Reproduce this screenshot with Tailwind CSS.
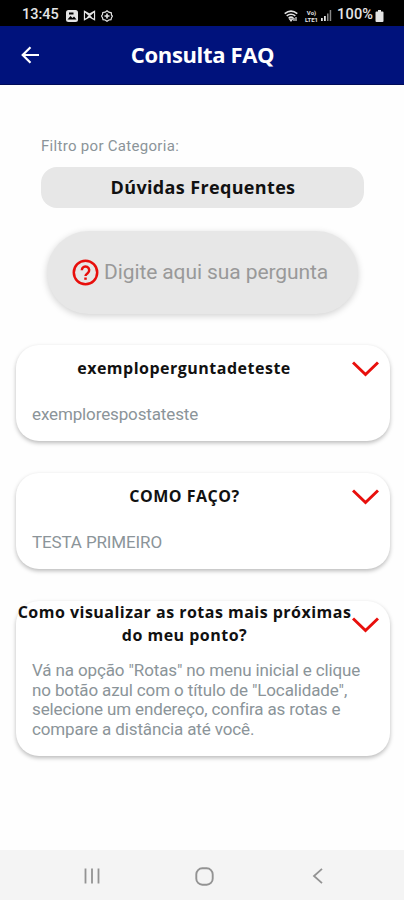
<!DOCTYPE html>
<html lang="pt-BR">
<head>
    <meta charset="UTF-8">
    <meta name="viewport" content="width=device-width, initial-scale=1.0">
    <title>Consulta FAQ</title>
    <script src="https://cdn.jsdelivr.net/npm/@tailwindcss/browser@4"></script>
</head>
<body class="h-[900px] flex flex-col overflow-hidden bg-[#fefefe] font-['Roboto',sans-serif]">
    <!-- Status bar -->
    <div class="h-[26px] shrink-0 bg-black text-[#e4e4e4] flex items-center justify-between pt-[5px] pl-[22px] pr-5">
        <div class="flex items-center">
            <span class="w-[37px] text-[14.5px] leading-none font-medium whitespace-nowrap">13:45</span>
            <svg class="ml-[7px] w-3 h-3" viewBox="0 0 12 12">
                <rect width="12" height="12" rx="2.5" fill="currentColor"/>
                <path d="M1.5 9.5 4.500 6l2 2L8 6.500l2.500 3z" fill="#000"/>
                <path d="M3 2.500h4.500v2H3z" fill="#000"/>
            </svg>
            <svg class="ml-[5px] w-[13px] h-[11px]" viewBox="0 0 13 12" fill="none" stroke="currentColor" stroke-width="1.300">
                <path d="M1 1.500v9l5.500-3 5.500 3v-9l-5.500 3zM1 1.500l8 7M12 1.500l-8 7"/>
            </svg>
            <svg class="ml-[5px] w-3 h-3" viewBox="0 0 12 12" fill="none" stroke="currentColor">
                <path d="M6 .8 7.800 2.200l2.500.6.2 2.300L11.500 6l-1 1.700-.5 2-2.200.3L6 11.300 4.200 10l-2.200-.3-.5-2L.5 6l1-1.500.3-2 2.400-.3z" stroke-width="1.200"/>
                <path d="M6 3.500v5M3.500 6h5" stroke-width="1.600"/>
            </svg>
        </div>
        <div class="flex items-center">
            <svg class="w-[15px] h-3" viewBox="0 0 15 12" fill="none" stroke="currentColor" stroke-width="1.600">
                <path d="M.7 3.600Q7 -1.400 13.300 3.600M2.700 5.900Q7 2.600 11.300 5.900M4.700 8.200Q7 6.200 9.300 8.200"/>
                <path d="m5.500 9 1.500 2 1.500-2zM12 7v4M10 11V8" stroke-width="1.200"/>
            </svg>
            <div class="ml-[5px] w-[15px] text-[6px] leading-[7px] font-bold text-center">
                <div>Vo)</div>
                <div class="whitespace-nowrap">LTE1</div>
            </div>
            <svg class="ml-px w-3 h-[11px]" viewBox="0 0 12 11">
                <path d="M1 8h1.800v3H1zM4 6h1.800v5H4z" fill="currentColor"/>
                <path d="M7 3.500h1.500V11H7zM9.700 0h1.500v11H9.700z" fill="#888"/>
            </svg>
            <span class="ml-[5px] w-[38px] text-[14.5px] leading-none font-medium whitespace-nowrap tracking-[0.2px]">100%</span>
            <svg class="w-[9px] h-3" viewBox="0 0 9 12" fill="currentColor">
                <path d="M3 0h3v1.500h1.500q1 0 1 1V11q0 1-1 1h-6q-1 0-1-1V2.500q0-1 1-1H3z"/>
            </svg>
        </div>
    </div>

    <!-- Header -->
    <div class="h-[59px] shrink-0 bg-[#00127c] border-b border-[#000b58] text-white grid grid-cols-[60px_1fr_60px] items-center">
        <svg class="ml-[21px] w-[19px] h-[18px]" viewBox="0 0 19 18" fill="none" stroke="currentColor" stroke-width="2.200">
            <path d="M18 9H2M9.500 1.200 1.700 9l7.800 7.800"/>
        </svg>
        <h1 class="pb-[2px] pl-[1px] text-center text-[22px] leading-none font-bold tracking-[-0.35px] font-['Open_Sans',sans-serif]">Consulta FAQ</h1>
    </div>

    <main class="flex-1 flex flex-col">
        <!-- Category filter -->
        <label class="mt-[51px] ml-[41px] text-[15px] leading-5 text-[#8b9499] tracking-[0.3px]">Filtro por Categoria:</label>
        <div class="mt-[11px] ml-[41px] w-[323px] h-[41px] rounded-[16px] bg-[#e7e7e7] flex items-center justify-center pb-[2px] pl-[1px] text-[18px] leading-none font-bold text-[#111] tracking-[0.35px] font-['Open_Sans',sans-serif]">Dúvidas Frequentes</div>

        <!-- Search -->
        <div class="mt-[23px] ml-[47px] w-[311px] h-[83px] rounded-full bg-[#e7e7e7] shadow-[0_2px_7px_rgba(0,0,0,0.18)] flex items-center pl-[25px]">
            <svg class="w-[27px] h-[27px] text-[#e80f0c]" viewBox="0 0 27 27" fill="none" stroke="currentColor" stroke-width="2.500">
                <circle cx="13.500" cy="13.500" r="11.700"/>
                <path d="M9.800 11.200a3.700 3.700 0 1 1 5.800 3c-1.400 1-2.100 1.500-2.100 2.800"/>
                <path d="M13.500 18.500v2.300"/>
            </svg>
            <span class="ml-[5px] text-[21px] text-[#999] tracking-[-0.1px] whitespace-nowrap">Digite aqui sua pergunta</span>
        </div>

        <!-- Questions -->
        <div class="mt-[31px] ml-4 w-[374px] flex flex-col gap-8">
            <div class="h-24 rounded-[23px] bg-white shadow-[0_2px_4px_rgba(0,0,0,0.27)]">
                <div class="h-[47px] flex items-center">
                    <h2 class="w-[336px] text-center text-[16px] leading-[23px] font-bold text-[#111] tracking-[0.5px] font-['Open_Sans',sans-serif]">exemploperguntadeteste</h2>
                    <svg class="w-[27px] h-4 text-[#e80f0c]" viewBox="0 0 27 16" fill="none" stroke="currentColor" stroke-width="3">
                        <path d="M1 1.500 13.500 13.500 26 1.500"/>
                    </svg>
                </div>
                <p class="mt-[13px] ml-4 text-[17px] leading-[19.700px] text-[#8b9499] tracking-[-0.13px]">exemplorespostateste</p>
            </div>
            <div class="h-24 rounded-[23px] bg-white shadow-[0_2px_4px_rgba(0,0,0,0.27)]">
                <div class="h-[47px] flex items-center">
                    <h2 class="w-[336px] pl-[1px] text-center text-[16px] leading-[23px] font-bold text-[#111] tracking-[0.5px] font-['Open_Sans',sans-serif]">COMO FAÇO?</h2>
                    <svg class="w-[27px] h-4 text-[#e80f0c]" viewBox="0 0 27 16" fill="none" stroke="currentColor" stroke-width="3">
                        <path d="M1 1.500 13.500 13.500 26 1.500"/>
                    </svg>
                </div>
                <p class="mt-[13px] ml-4 text-[17px] leading-[19.700px] text-[#8b9499] tracking-[-0.130px]">TESTA PRIMEIRO</p>
            </div>
            <div class="h-[155px] rounded-[23px] bg-white shadow-[0_2px_4px_rgba(0,0,0,0.27)]">
                <div class="h-[47px] flex items-center">
                    <h2 class="w-[336px] pb-[1px] pl-[1px] text-center text-[16px] leading-[23.500px] font-bold text-[#111] tracking-[0.48px] whitespace-nowrap font-['Open_Sans',sans-serif]">Como visualizar as rotas mais próximas<br>do meu ponto?</h2>
                    <svg class="w-[27px] h-4 text-[#e80f0c]" viewBox="0 0 27 16" fill="none" stroke="currentColor" stroke-width="3">
                        <path d="M1 1.500 13.500 13.500 26 1.500"/>
                    </svg>
                </div>
                <p class="mt-[13px] ml-4 text-[17px] leading-[19.700px] text-[#8b9499] tracking-[-0.130px] whitespace-nowrap">Vá na opção "Rotas" no menu inicial e clique<br>no botão azul com o título de "Localidade",<br>selecione um endereço, confira as rotas e<br>compare a distância até você.</p>
            </div>
        </div>
    </main>

    <!-- Navigation bar -->
    <nav class="h-[50px] shrink-0 bg-[#f4f4f4] text-[#939393] flex items-center pt-[2px]">
        <svg class="ml-[84px] w-4 h-4" viewBox="0 0 16 16" fill="none" stroke="currentColor" stroke-width="1.800">
            <path d="M1.500.5v15M8 .5v15M14.500.5v15"/>
        </svg>
        <svg class="ml-[95px] w-[19px] h-[19px]" viewBox="0 0 19 19" fill="none" stroke="currentColor" stroke-width="1.900">
            <rect x="1.300" y="1.300" width="16.400" height="16.400" rx="6"/>
        </svg>
        <svg class="ml-[98px] w-[11px] h-4" viewBox="0 0 11 16" fill="none" stroke="currentColor" stroke-width="1.800">
            <path d="M10 .8 2 8l8 7.200"/>
        </svg>
    </nav>
</body>
</html>
